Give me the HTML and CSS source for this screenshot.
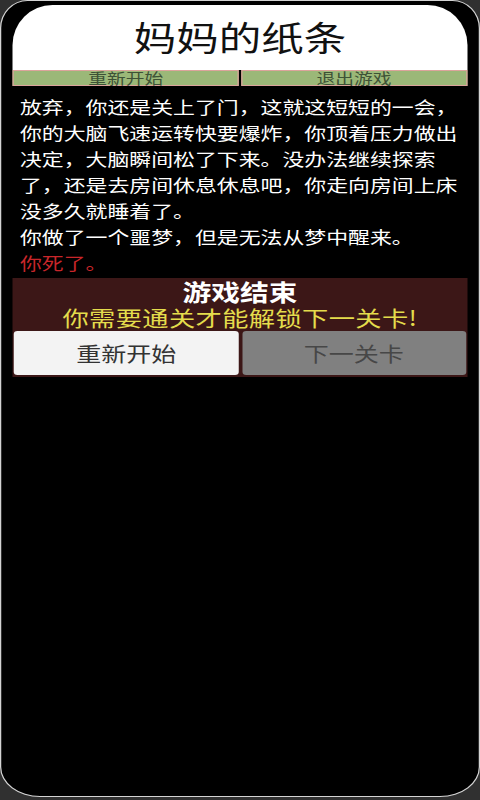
FILE: index.html
```html
<!DOCTYPE html>
<html lang="zh-CN">
<head>
<meta charset="utf-8">
<title>妈妈的纸条</title>
<link rel="stylesheet" href="styles.css">
</head>
<body>
<div class="screen">
  <header class="title">妈妈的纸条</header>
  <nav class="topbar">
    <button class="top-btn">重新开始</button>
    <button class="top-btn">退出游戏</button>
  </nav>
  <div class="story">
    <p>放弃，你还是关上了门，这就这短短的一会，你的大脑飞速运转快要爆炸，你顶着压力做出决定，大脑瞬间松了下来。没办法继续探索了，还是去房间休息休息吧，你走向房间上床没多久就睡着了。</p>
    <p>你做了一个噩梦，但是无法从梦中醒来。</p>
    <p class="dead">你死了。</p>
  </div>
  <section class="gameover">
    <div class="go-title">游戏结束</div>
    <div class="go-sub">你需要通关才能解锁下一关卡!</div>
    <div class="go-actions">
      <button class="go-btn restart">重新开始</button>
      <button class="go-btn next">下一关卡</button>
    </div>
  </section>
</div>
</body>
</html>
```
FILE: styles.css
```css
html, body {
  margin: 0;
  padding: 0;
}
body {
  width: 480px;
  height: 800px;
  overflow: hidden;
  background: #303030;
  font-family: "Noto Sans CJK SC", "Noto Sans", sans-serif;
}
.screen {
  width: 384px;
  height: 797px;
  box-sizing: border-box;
  transform: scaleX(1.25);
  transform-origin: 0 0;
  background: #000;
  border: 1px solid #d4d4d4;
  border-radius: 22px 22px 32px 32px / 28px 28px 30px 30px;
  padding: 4px 9.4px 0;
}
.title {
  height: 65px;
  background: #fff;
  border-radius: 32px 32px 0 0 / 40px 40px 0 0;
  display: flex;
  align-items: center;
  justify-content: center;
  font-size: 34px;
  line-height: 40px;
  color: #111;
  padding-bottom: 2px;
  box-sizing: border-box;
}
.topbar {
  display: flex;
  gap: 2px;
  height: 16px;
}
.top-btn {
  flex: 1;
  margin: 0;
  padding: 0;
  background: #9bb878;
  border: 1px solid #dca49c;
  font-family: inherit;
  font-size: 15px;
  line-height: 14px;
  color: #3e5236;
}
.story {
  margin-top: 8px;
  padding-left: 5.6px;
  width: 358px;
  font-size: 17.5px;
  line-height: 26px;
  color: #fff;
}
.story p {
  margin: 0;
}
.story .dead {
  color: #c8262a;
}
.gameover {
  margin-top: 2px;
  background: #3c1717;
  padding: 0 1px 2px;
  text-align: center;
}
.go-title {
  font-size: 23px;
  font-weight: bold;
  line-height: 26px;
  color: #fff;
}
.go-sub {
  font-size: 21px;
  line-height: 26px;
  letter-spacing: 0.3px;
  color: #e4dc4c;
}
.go-actions {
  margin-top: 1px;
  display: flex;
  gap: 3px;
}
.go-btn {
  flex: 1;
  height: 44px;
  margin: 0;
  padding: 0;
  border: none;
  border-radius: 3px;
  font-family: inherit;
  font-size: 20px;
}
.go-btn.restart {
  background: #f3f3f3;
  color: #333;
}
.go-btn.next {
  background: #808080;
  color: #474747;
}
```
